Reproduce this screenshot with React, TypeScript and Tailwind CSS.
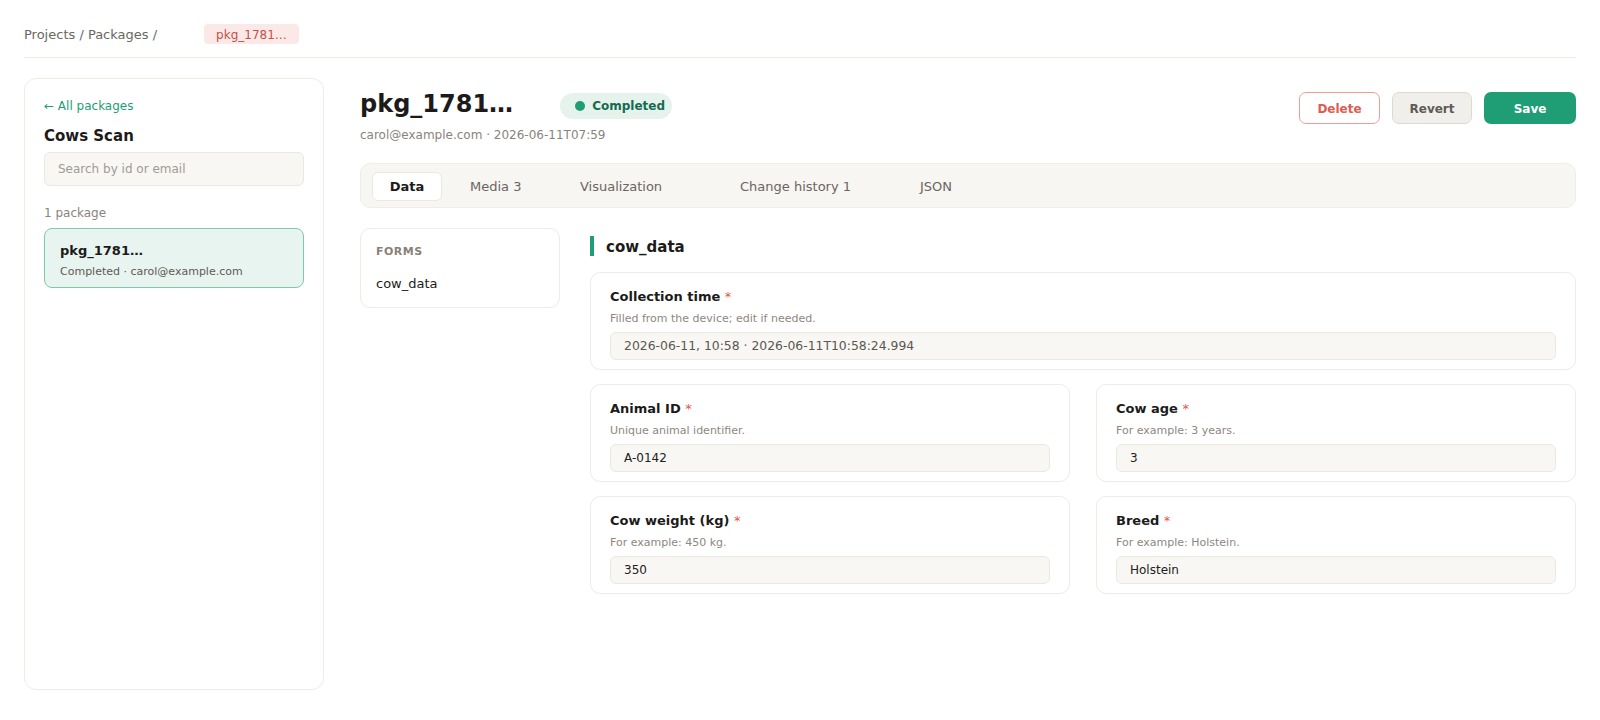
import React from 'react';

type FieldProps = {
  label: string;
  hint: string;
  value: string;
  muted?: boolean;
};

function Field({ label, hint, value, muted }: FieldProps) {
  return (
    <div className="rounded-[10px] border border-[#eeece7] bg-white px-[19px] pt-[15px] pb-[9px]">
      <div className="text-[13px] leading-[18px] font-bold text-[#1c1b1a]">
        {label} <span className="font-normal text-[#e5534b]">*</span>
      </div>
      <div className="mt-[5px] text-[11px] leading-4 text-[#8e8780]">{hint}</div>
      <div
        className={`mt-[5px] flex h-7 items-center rounded-md border border-[#ebe8e2] bg-[#f8f7f4] px-[13px] ${
          muted ? 'text-[12.4px] text-[#5c5752]' : 'text-[12px] text-[#222120]'
        }`}
      >
        {value}
      </div>
    </div>
  );
}

export default function App() {
  return (
    <div className="min-h-screen bg-white px-6 font-['DejaVu_Sans',sans-serif] text-[#1c1b1a]">
      {/* Breadcrumbs */}
      <div className="flex h-[58px] items-start border-b border-[#ecebe6] pt-6">
        <span className="pt-[1px] text-[13px] leading-5 text-[#6b6661]">Projects / Packages /</span>
        <span className="ml-[47px] flex h-5 items-center rounded-[4px] bg-[#fbe9e7] px-3 pt-[1px] text-[12px] text-[#c4514a]">
          pkg_1781…
        </span>
      </div>

      <div className="mt-5 flex gap-9">
        {/* Sidebar */}
        <aside className="h-[612px] w-[300px] shrink-0 rounded-xl border border-[#eeece7] bg-white px-[19px] pt-[18px]">
          <div className="text-[12px] leading-[18px] text-[#1f9d74]">← All packages</div>
          <h2 className="mt-[11px] text-[15px] leading-5 font-bold">Cows Scan</h2>
          <div className="mt-[6px] flex h-[34px] items-center rounded-md border border-[#ebe8e2] bg-[#f8f7f4] px-[13px] text-[12px] text-[#a19b94]">
            Search by id or email
          </div>
          <div className="mt-[19px] text-[12px] leading-4 text-[#8a847d]">1 package</div>
          <div className="mt-[7px] h-[60px] rounded-lg border border-[#7fc8aa] bg-[#e8f4ef] px-[15px] pt-[13px]">
            <div className="text-[13px] leading-[18px] font-bold">pkg_1781…</div>
            <div className="mt-[4px] text-[11px] leading-4 text-[#5f5a55]">Completed · carol@example.com</div>
          </div>
        </aside>

        {/* Main */}
        <main className="min-w-0 flex-1 pt-[10px]">
          <div className="flex items-start justify-between">
            <div>
              <div className="flex h-8 items-center">
                <h1 className="text-[24px] leading-8 font-bold">pkg_1781…</h1>
                <span className="mt-[4px] ml-[47px] flex h-[26px] items-center gap-[7px] rounded-full bg-[#e6f3ed] pr-[7px] pl-[15px] text-[12px] font-bold text-[#136b50]">
                  <span className="h-[10px] w-[10px] rounded-full bg-[#1f9d74]" />
                  Completed
                </span>
              </div>
              <div className="mt-[7px] text-[12px] leading-4 text-[#8a837c]">
                carol@example.com · 2026-06-11T07:59
              </div>
            </div>
            <div className="mt-1 flex gap-3">
              <button className="h-8 w-[81px] rounded-[7px] border border-[#f09d97] bg-white pt-[1px] text-[12px] font-bold text-[#e05a4f]">
                Delete
              </button>
              <button className="h-8 w-[80px] rounded-[7px] border border-[#dedad3] bg-[#f0efeb] pt-[1px] text-[12px] font-bold text-[#5f5a55]">
                Revert
              </button>
              <button className="h-8 w-[92px] rounded-[7px] bg-[#1f9d74] pt-[1px] text-[12px] font-bold text-white">
                Save
              </button>
            </div>
          </div>

          {/* Tabs */}
          <div className="mt-[20px] flex h-[45px] items-center rounded-[10px] border border-[#efede8] bg-[#f7f6f3] pt-[2px] pl-[11px] text-[13px]">
            <div className="flex h-[29px] w-[70px] items-center justify-center rounded-md border border-[#ebe8e2] bg-white font-bold">
              Data
            </div>
            <div className="ml-[10px] w-[110px] pl-[18px] text-[#6b6560]">Media 3</div>
            <div className="w-[160px] pl-[18px] text-[#6b6560]">Visualization</div>
            <div className="w-[180px] pl-[18px] text-[#6b6560]">Change history 1</div>
            <div className="pl-[18px] text-[#6b6560]">JSON</div>
          </div>

          <div className="mt-5 flex gap-[30px]">
            {/* Forms list */}
            <div className="h-[80px] w-[200px] shrink-0 rounded-[10px] border border-[#eeece7] bg-white px-[15px] pt-[15px]">
              <div className="text-[11px] leading-4 font-bold tracking-[0.5px] text-[#8a8078]">FORMS</div>
              <div className="mt-[14px] text-[13px] leading-5">cow_data</div>
            </div>

            {/* Form section */}
            <section className="min-w-0 flex-1 pt-2">
              <div className="mb-4 flex h-5 items-center gap-3">
                <span className="h-5 w-1 bg-[#1f9d74]" />
                <h3 className="pt-[2px] text-[15px] leading-5 font-bold">cow_data</h3>
              </div>
              <div className="flex flex-col gap-[14px]">
                <Field
                  label="Collection time"
                  hint="Filled from the device; edit if needed."
                  value="2026-06-11, 10:58 · 2026-06-11T10:58:24.994"
                  muted
                />
                <div className="grid grid-cols-2 gap-x-[26px] gap-y-[14px]">
                  <Field label="Animal ID" hint="Unique animal identifier." value="A-0142" />
                  <Field label="Cow age" hint="For example: 3 years." value="3" />
                  <Field label="Cow weight (kg)" hint="For example: 450 kg." value="350" />
                  <Field label="Breed" hint="For example: Holstein." value="Holstein" />
                </div>
              </div>
            </section>
          </div>
        </main>
      </div>
    </div>
  );
}
